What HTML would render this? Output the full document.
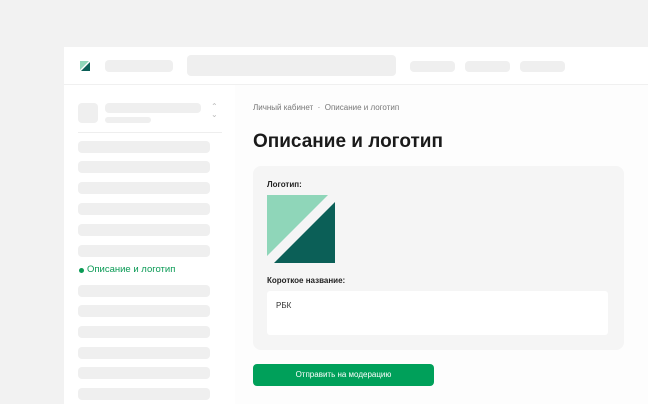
<!DOCTYPE html>
<html><head><meta charset="utf-8"><style>
body{margin:0;width:648px;height:404px;background:#f2f2f2;position:relative;overflow:hidden;font-family:"Liberation Sans",sans-serif}
.a{position:absolute}
.g{background:#efefef;border-radius:4px;position:absolute}
</style></head><body>
<div class="a" style="left:64px;top:47px;width:584px;height:357px;background:#fff"></div>
<div class="a" style="left:64px;top:84px;width:584px;height:1px;background:#f0f0f0"></div>
<div class="a" style="left:235px;top:85px;width:413px;height:319px;background:#fdfdfd"></div>
<svg class="a" style="left:80px;top:61px" width="10" height="10"><polygon points="0,0 9,0 0,9" fill="#8fd6b9"/><polygon points="1,10 10,1 10,10" fill="#0b5f57"/></svg>
<div class="g" style="left:105px;top:60px;width:68px;height:12px"></div>
<div class="g" style="left:187px;top:55px;width:209px;height:21px"></div>
<div class="g" style="left:410px;top:61px;width:45px;height:11px"></div>
<div class="g" style="left:465px;top:61px;width:45px;height:11px"></div>
<div class="g" style="left:520px;top:61px;width:45px;height:11px"></div>
<div class="g" style="left:78px;top:103px;width:20px;height:20px"></div>
<div class="g" style="left:105px;top:103px;width:96px;height:10px"></div>
<div class="g" style="left:105px;top:117px;width:46px;height:6px"></div>
<div class="a" style="left:211px;top:103px;font-size:8px;color:#bbb;line-height:8px">⌃<br>⌄</div>
<div class="a" style="left:78px;top:132px;width:144px;height:1px;background:#eee"></div>
<div class="g" style="left:78px;top:141px;width:132px;height:12px"></div>
<div class="g" style="left:78px;top:161px;width:132px;height:12px"></div>
<div class="g" style="left:78px;top:182px;width:132px;height:12px"></div>
<div class="g" style="left:78px;top:203px;width:132px;height:12px"></div>
<div class="g" style="left:78px;top:224px;width:132px;height:12px"></div>
<div class="g" style="left:78px;top:245px;width:132px;height:12px"></div>
<div class="a" style="left:79px;top:268px;width:5px;height:5px;border-radius:50%;background:#0a9a55"></div>
<div class="a" style="left:87px;top:264px;font-size:9.5px;color:#0a9a55">Описание и логотип</div>
<div class="g" style="left:78px;top:285px;width:132px;height:12px"></div>
<div class="g" style="left:78px;top:305px;width:132px;height:12px"></div>
<div class="g" style="left:78px;top:326px;width:132px;height:12px"></div>
<div class="g" style="left:78px;top:347px;width:132px;height:12px"></div>
<div class="g" style="left:78px;top:367px;width:132px;height:12px"></div>
<div class="g" style="left:78px;top:388px;width:132px;height:12px"></div>
<div class="a" style="left:253px;top:103px;font-size:8px;color:#777">Личный кабинет &nbsp;·&nbsp; Описание и логотип</div>
<div class="a" style="left:253px;top:131px;font-size:19px;font-weight:bold;color:#1a1a1a">Описание и логотип</div>
<div class="a" style="left:253px;top:166px;width:371px;height:184px;background:#f5f5f5;border-radius:8px"></div>
<div class="a" style="left:267px;top:180px;font-size:8px;font-weight:bold;color:#222">Логотип:</div>
<svg class="a" style="left:267px;top:195px" width="68" height="68"><polygon points="0,0 61,0 0,61" fill="#8fd6b9"/><polygon points="7,68 68,7 68,68" fill="#0b5f57"/></svg>
<div class="a" style="left:267px;top:276px;font-size:8px;font-weight:bold;color:#222">Короткое название:</div>
<div class="a" style="left:267px;top:291px;width:341px;height:44px;background:#fff;border-radius:3px"></div>
<div class="a" style="left:276px;top:301px;font-size:8px;color:#333">РБК</div>
<div class="a" style="left:253px;top:364px;width:181px;height:22px;background:#00a05a;border-radius:4px;color:#fff;font-size:8px;text-align:center;line-height:22px">Отправить на модерацию</div>
</body></html>
